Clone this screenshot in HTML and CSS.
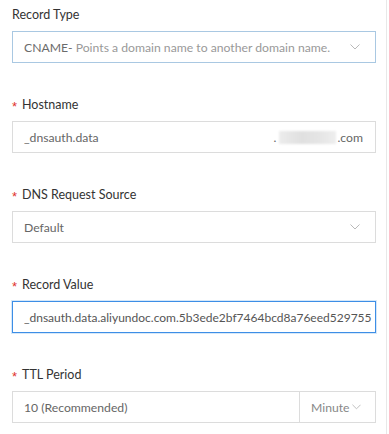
FILE: index.html
```html
<!DOCTYPE html>
<html>
<head>
<meta charset="utf-8">
<link rel="stylesheet" href="styles.css">
</head>
<body>
<div class="page">
  <form class="form">
    <div class="item">
      <div class="label">Record Type</div>
      <div class="box box-hover">
        <span class="val"><span class="strong">CNAME-</span> Points a domain name to another domain name.</span>
        <svg class="chev" width="10" height="6" viewBox="0 0 10 6"><path d="M0.5 0.5 L5 5 L9.5 0.5" fill="none" stroke="#b9b9b9" stroke-width="1"/></svg>
      </div>
    </div>
    <div class="item">
      <div class="label"><span class="req">*</span>Hostname</div>
      <div class="box">
        <span class="val">_dnsauth.data</span>
        <span class="suffix">.<span class="blur"></span>.com</span>
      </div>
    </div>
    <div class="item">
      <div class="label"><span class="req">*</span>DNS Request Source</div>
      <div class="box">
        <span class="val">Default</span>
        <svg class="chev" width="10" height="6" viewBox="0 0 10 6"><path d="M0.5 0.5 L5 5 L9.5 0.5" fill="none" stroke="#b9b9b9" stroke-width="1"/></svg>
      </div>
    </div>
    <div class="item">
      <div class="label"><span class="req">*</span>Record Value</div>
      <div class="box box-focus">
        <span class="val clip">_dnsauth.data.aliyundoc.com.5b3ede2bf7464bcd8a76eed529755</span>
      </div>
    </div>
    <div class="item">
      <div class="label"><span class="req">*</span>TTL Period</div>
      <div class="combo">
        <div class="box combo-main"><span class="val">10 (Recommended)</span></div>
        <div class="box combo-unit">
          <span class="val">Minute</span>
          <svg class="chev small" width="10" height="6" viewBox="0 0 10 6"><path d="M0.5 0.5 L5 5 L9.5 0.5" fill="none" stroke="#b9b9b9" stroke-width="1"/></svg>
        </div>
      </div>
    </div>
  </form>
  <div class="edge"></div>
</div>
</body>
</html>
```
FILE: styles.css
```css
* { box-sizing: border-box; }
html, body { margin: 0; padding: 0; background: #fff; }
body {
  font-family: "Lato", "Open Sans", sans-serif;
  font-size: 12.2px;
  color: #333;
  width: 389px;
  height: 434px;
  overflow: hidden;
}
.page {
  display: flex;
  height: 434px;
}
.form {
  flex: 1;
  min-width: 0;
  padding: 5px 10px 0 12px;
}
.edge {
  width: 1px;
  flex: none;
  background: #e8e8e8;
  margin-right: 2px;
}
.item {
  margin-bottom: 32px;
}
.label {
  height: 20px;
  line-height: 20px;
  margin-bottom: 6px;
  color: #333;
  display: flex;
  align-items: center;
  font-size: 12.5px;
}
.req {
  color: #e0322b;
  width: 10px;
  font-family: "Liberation Sans", sans-serif;
  font-size: 13px;
  position: relative;
  top: 2px;
}
.box {
  height: 32px;
  min-width: 0;
  border: 1px solid #dcdcdc;
  display: flex;
  align-items: center;
  padding: 0 12px 0 11px;
  color: #666;
  background: #fff;
}
.box-hover { border-color: #a9c8e2; }
.box-hover .val { color: #999; }
.box-hover .strong { color: #6b6b6b; }
.box-focus {
  border-color: #3d8ee6;
  box-shadow: 0 0 0 1px #d6e8f9;
  padding-right: 0;
}
.val {
  flex: 1;
  min-width: 0;
  white-space: nowrap;
  overflow: hidden;
}
.clip { color: #555; font-size: 12px; }
.chev {
  flex: none;
  margin-right: 3px;
}
.suffix {
  display: flex;
  align-items: center;
  color: #666;
}
.blur {
  display: inline-block;
  width: 57px;
  height: 13px;
  margin: 0 1px 0 3px;
  background: linear-gradient(90deg, #ececec, #e0e0e0 40%, #e5e5e5 70%, #eeeeee);
  filter: blur(1px);
}
.combo {
  display: flex;
}
.combo-main {
  flex: 1;
}
.combo-unit {
  flex: none;
  width: 77px;
  margin-left: -1px;
  padding: 0 8px 0 11px;
}
.combo-unit .val { color: #888; flex: none; }
.chev.small { margin-left: 2px; width: 9px; }
```
